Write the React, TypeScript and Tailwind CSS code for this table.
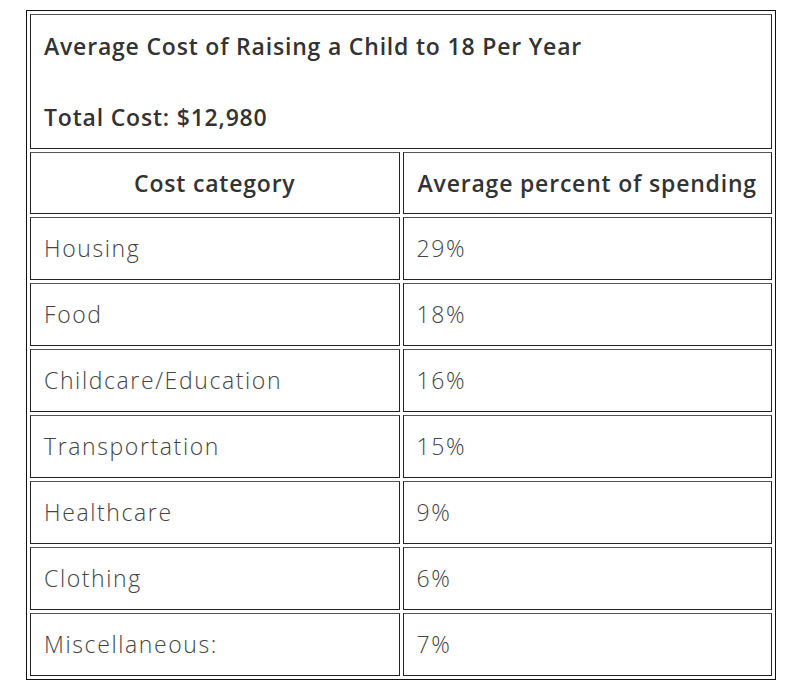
const rows = [
  ["Housing", "29%"],
  ["Food", "18%"],
  ["Childcare/Education", "16%"],
  ["Transportation", "15%"],
  ["Healthcare", "9%"],
  ["Clothing", "6%"],
  ["Miscellaneous:", "7%"],
];

const cell = "border border-[#222] border-t-[#555] px-[13px]";
const head = "text-[23px] font-semibold tracking-[0.035em] text-[#333]";
const body = "text-[23px] font-light tracking-[0.07em]";

export default function App() {
  return (
    <div className="min-h-[688px] bg-white pt-[10px] pl-[26px] text-[#444] font-['Open_Sans','Liberation_Sans',sans-serif]">
      <table className="w-[750px] table-fixed border-separate border-spacing-[3px] border border-[#111]">
        <tbody>
          <tr>
            <td colSpan={2} className={`${cell} ${head} h-[135px] align-top pt-[16px] leading-[30px]`}>
              <p className="mb-[41px]">Average Cost of Raising a Child to 18 Per Year</p>
              <p>Total Cost: $12,980</p>
            </td>
          </tr>
          <tr>
            <td className={`${cell} ${head} h-[62px] align-middle text-center`}>Cost category</td>
            <td className={`${cell} ${head} h-[62px] align-middle text-center`}>Average percent of spending</td>
          </tr>
          {rows.map(([name, pct]) => (
            <tr key={name}>
              <td className={`${cell} ${body} h-[63px] align-middle`}>{name}</td>
              <td className={`${cell} ${body} h-[63px] align-middle`}>{pct}</td>
            </tr>
          ))}
        </tbody>
      </table>
    </div>
  );
}
